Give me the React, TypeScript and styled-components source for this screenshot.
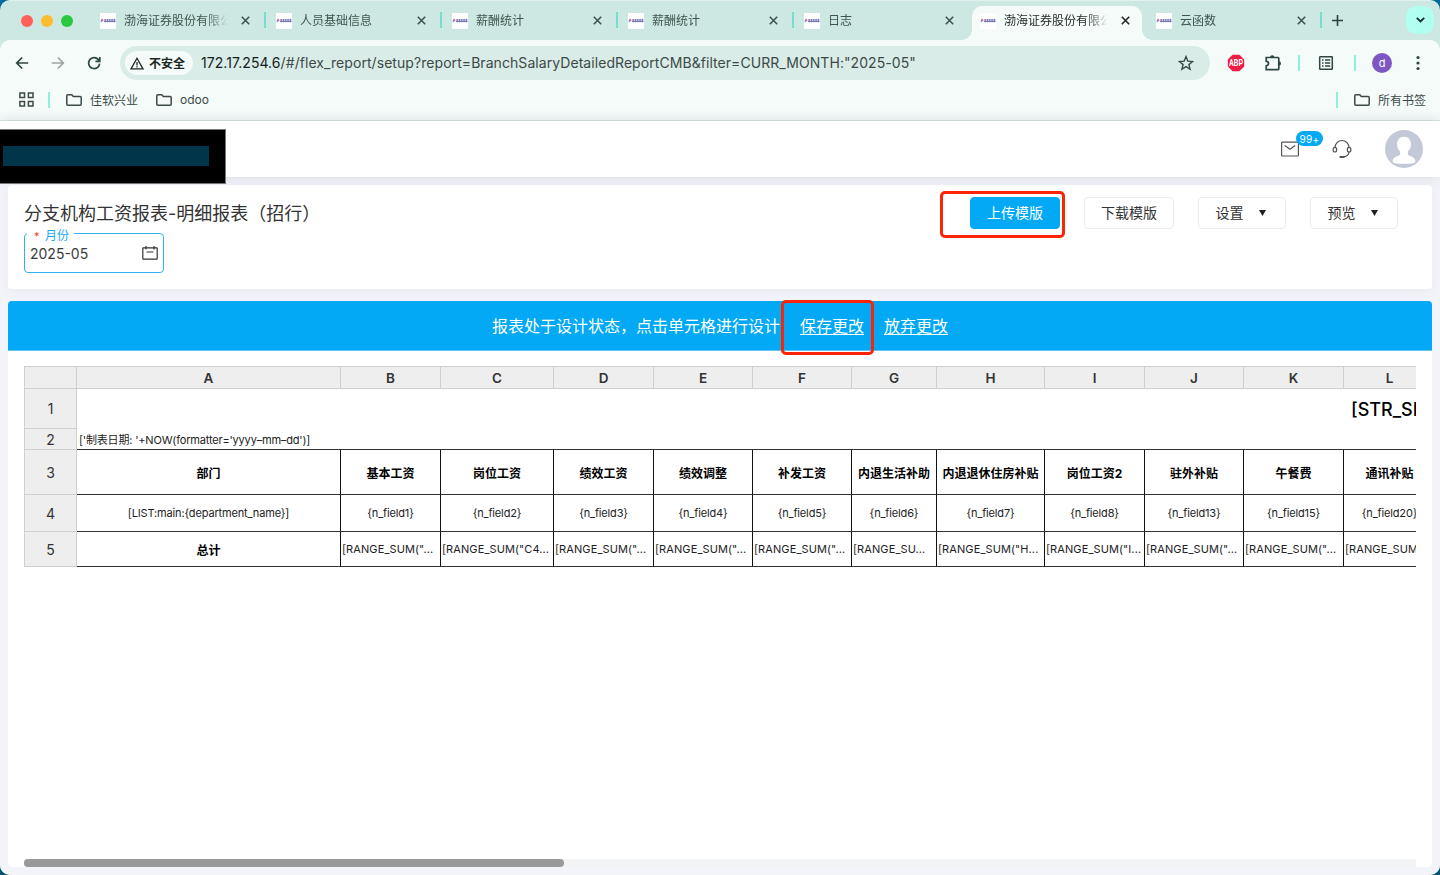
import React from 'react';
import styled, { createGlobalStyle, css } from 'styled-components';

const latin = '"Inter", "Noto Sans CJK SC", sans-serif';

const Global = createGlobalStyle`
  * { box-sizing: border-box; }
  html, body { margin: 0; padding: 0; background: #006a8e; overflow: hidden; }
  body { font-family: ${latin}; }
`;

const Desktop = styled.div`
  width: 1440px;
  height: 875px;
  background: linear-gradient(#00699c, #00566f);
`;
const Window = styled.div`
  width: 1440px;
  height: 875px;
  display: flex;
  flex-direction: column;
  border-radius: 10px;
  overflow: hidden;
  background: #cde8e2;
  border-top: 1px solid #e2f1ee;
`;

/* ---------- tab strip ---------- */
const TabStrip = styled.div`
  height: 39px;
  flex: none;
  display: flex;
  align-items: stretch;
  padding-left: 21px;
`;
const Lights = styled.div`
  width: 67px;
  display: flex;
  gap: 8px;
  align-items: center;
`;
const Light = styled.span<{ $c: string }>`
  width: 12px;
  height: 12px;
  border-radius: 50%;
  background: ${p => p.$c};
`;
const Tab = styled.div<{ $active?: boolean }>`
  position: relative;
  width: 176px;
  display: flex;
  align-items: center;
  padding: 0 12px;
  font-size: 12px;
  color: #3f5450;
  ${p => p.$active && css`
    width: 170px;
    margin: 5px 2px 0 4px;
    padding: 0 8px 5px;
    background: #f4fbf9;
    border-radius: 10px 10px 0 0;
    color: #1c2a27;
    &::before, &::after {
      content: '';
      position: absolute;
      bottom: 0;
      width: 10px;
      height: 10px;
    }
    &::before { left: -10px; background: radial-gradient(circle at 0 0, transparent 9.5px, #f4fbf9 10px); }
    &::after { right: -10px; background: radial-gradient(circle at 100% 0, transparent 9.5px, #f4fbf9 10px); }
  `}
`;
const Favicon = styled.svg`
  width: 16px;
  height: 16px;
  flex: none;
  margin-right: 8px;
  background: #fff;
`;
const TabTitle = styled.span`
  width: 105px;
  height: 18px;
  line-height: 18px;
  white-space: nowrap;
  overflow: hidden;
  mask-image: linear-gradient(90deg, #000 82px, transparent 104px);
`;
const Close = styled.svg`
  width: 9px;
  height: 9px;
  flex: none;
  margin-left: 12px;
  stroke: currentColor;
  stroke-width: 1.6;
  fill: none;
`;
const TabSep = styled.span`
  position: absolute;
  right: -2px;
  top: 11px;
  width: 2px;
  height: 16px;
  background: #7adccd;
`;
const NewTab = styled.svg`
  width: 11px;
  height: 11px;
  align-self: center;
  margin-left: 12px;
  stroke: #2c413d;
  stroke-width: 1.6;
`;
const TabSearch = styled.div`
  width: 28px;
  height: 28px;
  margin: 5px 6px 0 auto;
  border-radius: 10px;
  background: #b2fff1;
  display: grid;
  place-items: center;
`;

/* ---------- toolbar ---------- */
const Chrome = styled.div`
  height: 81px;
  flex: none;
  background: #f4fbf9;
  border-radius: 10px 10px 0 0;
  border-bottom: 1px solid #d9e7e3;
`;
const Toolbar = styled.div`
  height: 46px;
  display: flex;
  align-items: center;
  padding: 0 14px;
`;
const NavIcon = styled.svg<{ $dim?: boolean }>`
  width: 16px;
  height: 16px;
  margin-right: 20px;
  flex: none;
  fill: none;
  stroke: ${p => (p.$dim ? '#9aa6a3' : '#2f4743')};
  stroke-width: 1.7;
`;
const Omnibox = styled.div`
  width: 1090px;
  height: 34px;
  margin-left: -2px;
  border-radius: 17px;
  background: #daece8;
  display: flex;
  align-items: center;
  padding: 0 16px 0 5px;
  flex: none;
`;
const Security = styled.div`
  width: 68px;
  height: 24px;
  border-radius: 12px;
  background: #f4fbf9;
  display: flex;
  align-items: center;
  gap: 5px;
  padding-left: 5px;
  font-size: 12px;
  font-weight: 600;
  color: #1d2926;
  white-space: nowrap;
  span { padding-bottom: 2px; }
`;
const Url = styled.div`
  margin-left: 8px;
  font-size: 14px;
  line-height: 20px;
  letter-spacing: 0.062px;
  color: #3c4a47;
  white-space: nowrap;
  b { font-weight: 400; color: #14201d; }
`;
const Star = styled.svg`
  width: 16px;
  height: 16px;
  margin-left: auto;
  fill: none;
  stroke: #3c4a47;
  stroke-width: 1.4;
`;
const Actions = styled.div`
  flex: 1;
  display: flex;
  align-items: center;
  padding-left: 17px;
`;
const ToolIcon = styled.svg<{ $ml?: number }>`
  flex: none;
  margin-left: ${p => p.$ml || 0}px;
  fill: none;
  stroke: #2f4743;
`;
const Bar = styled.span<{ $l?: number; $r?: number }>`
  width: 2px;
  height: 16px;
  flex: none;
  background: #90f0e0;
  margin: 0 ${p => p.$r || 0}px 0 ${p => p.$l || 0}px;
`;
const Profile = styled.span`
  width: 20px;
  height: 20px;
  flex: none;
  margin: 0 24px 0 16px;
  border-radius: 50%;
  background: #7e57c2;
  color: #fff;
  font-size: 11px;
  line-height: 20px;
  text-align: center;
`;
const Bookmarks = styled.div`
  height: 28px;
  display: flex;
  align-items: center;
  padding: 0 14px 1px 19px;
  font-size: 12px;
  color: #3b4a47;
`;
const Bookmark = styled.span`
  display: flex;
  align-items: center;
  gap: 8px;
  margin-right: 18px;
  white-space: nowrap;
  &:last-child { margin: 0; }
`;
const Grow = styled.span`
  flex: 1;
`;

/* ---------- page ---------- */
const Page = styled.div`
  flex: 1;
  background: #f3f4fa;
  display: flex;
  flex-direction: column;
  min-height: 0;
`;
const Header = styled.header`
  position: relative;
  height: 56px;
  flex: none;
  background: #fff;
  box-shadow: 0 0 12px rgba(40, 45, 70, 0.14);
  display: flex;
  align-items: center;
  justify-content: flex-end;
  padding-right: 17px;
`;
const Redaction = styled.div`
  position: absolute;
  left: 0;
  top: 8px;
  z-index: 2;
  width: 226px;
  height: 55px;
  background: #000;
  border: 1px solid #777;
  border-left: 0;
  padding: 16px 0 0 3px;
`;
const RedactionBar = styled.div`
  width: 206px;
  height: 20px;
  background: #00354a;
`;
const Mail = styled.div`
  position: relative;
  width: 18px;
  height: 18px;
  margin-right: 33px;
`;
const Count = styled.span`
  position: absolute;
  left: 15px;
  top: -9px;
  width: 27px;
  height: 15px;
  border-radius: 8px;
  background: #03a9f4;
  color: #fff;
  font-size: 10px;
  line-height: 16px;
  letter-spacing: 0.3px;
  text-align: center;
`;
const Headset = styled.svg`
  width: 20px;
  height: 20px;
  margin-right: 33px;
  fill: none;
  stroke: #555;
  stroke-width: 1.2;
`;
const Card = styled.section`
  height: 104px;
  flex: none;
  margin: 8px 8px 0;
  padding: 12px 34px 0 16px;
  border-radius: 4px;
  background: #fff;
  box-shadow: 0 2px 10px rgba(60, 70, 110, 0.05);
  display: flex;
  justify-content: space-between;
  align-items: flex-start;
`;
const Title = styled.h1`
  margin: 4px 0 6px;
  font-size: 18px;
  line-height: 26px;
  font-weight: 400;
  color: #333;
  white-space: nowrap;
`;
const Field = styled.div`
  position: relative;
  width: 140px;
  height: 40px;
  border: 1px solid #2fb3f0;
  border-radius: 4px;
  display: flex;
  align-items: center;
  justify-content: space-between;
  padding: 1px 5px 0;
  font-size: 14px;
  color: #3a3a3a;
  svg { margin-top: -2px; }
`;
const Label = styled.label`
  position: absolute;
  left: 2px;
  top: -7px;
  width: 47px;
  height: 18px;
  padding-left: 7px;
  background: #fff;
  display: flex;
  gap: 6px;
  font-size: 12px;
  line-height: 18px;
  color: #1ba9ee;
  white-space: nowrap;
  i { font-style: normal; color: #f5452d; width: 5px; font-size: 11px; }
`;
const Buttons = styled.div`
  display: flex;
`;
const Button = styled.button<{ $w: number; $primary?: boolean; $menu?: boolean }>`
  position: relative;
  width: ${p => p.$w}px;
  height: 32px;
  margin-left: 24px;
  padding: 0 ${p => (p.$menu ? 3 : 0)}px 0 0;
  border-radius: 4px;
  border: 1px solid ${p => (p.$primary ? '#03a9f4' : '#ececec')};
  background: ${p => (p.$primary ? '#03a9f4' : '#fff')};
  color: ${p => (p.$primary ? '#fff' : '#333')};
  font: 14px/20px ${latin};
  display: flex;
  align-items: center;
  justify-content: center;
  gap: 15px;
  svg { margin-top: -1px; }
`;
const Mark = styled.span<{ $x: number; $y: number; $w: number; $h: number }>`
  position: absolute;
  left: ${p => p.$x}px;
  top: ${p => p.$y}px;
  width: ${p => p.$w}px;
  height: ${p => p.$h}px;
  border: 3px solid #fb2407;
  border-radius: 5px;
  z-index: 3;
`;
const Sheet = styled.section`
  height: 566px;
  flex: none;
  margin: 12px 8px 0;
  background: #fff;
  border-radius: 4px;
  display: flex;
  flex-direction: column;
`;
const Notice = styled.div`
  height: 50px;
  flex: none;
  border-radius: 4px 4px 0 0;
  background: #03a9f4;
  border-bottom: 1px solid #62c6f6;
  color: #fff;
  font-size: 16px;
  line-height: 24px;
  display: flex;
  align-items: center;
  justify-content: center;
  gap: 20px;
`;
const Link = styled.a`
  position: relative;
  text-decoration: underline;
  text-underline-offset: 2px;
  text-decoration-thickness: 1px;
`;
const Viewport = styled.div`
  flex: 1;
  margin: 15px 16px 0;
  overflow: hidden;
`;
const Grid = styled.div`
  width: 1412px;
  display: grid;
  grid-template-columns: 53px 264px 100px 113px 100px 99px 99px 85px 108px 100px 99px 100px 92px;
  grid-template-rows: 22px 40px 21px 45px 37px 35px;
  border-top: 1px solid #cfcfcf;
`;
const Corner = styled.div`
  background: #eee;
  border: 1px solid #cfcfcf;
  border-top: 0;
`;
const ColHead = styled(Corner)`
  border-left: 0;
  text-align: center;
  font-size: 13.5px;
  line-height: 22px;
  font-weight: 600;
  color: #333;
`;
const RowHead = styled(Corner)`
  display: grid;
  place-items: center;
  font-size: 14px;
  color: #333;
`;
const Cell = styled.div<{ $bold?: boolean; $left?: boolean }>`
  min-width: 0;
  display: flex;
  align-items: center;
  justify-content: ${p => (p.$left ? 'flex-start' : 'center')};
  padding: 0 1px;
  border-right: 1px solid #111;
  border-bottom: 1px solid #333;
  font-size: ${p => (p.$bold ? 12 : 11)}px;
  letter-spacing: ${p => (p.$bold ? 0 : p.$left ? 0.1 : -0.15)}px;
  font-weight: ${p => (p.$bold ? 700 : 400)};
  color: ${p => (p.$bold ? '#000' : '#222')};
  white-space: nowrap;
`;
const Free = styled.div<{ $title?: boolean }>`
  grid-column: 2 / -1;
  display: flex;
  align-items: center;
  white-space: nowrap;
  font-size: ${p => (p.$title ? 18 : 11)}px;
  letter-spacing: ${p => (p.$title ? 0 : -0.18)}px;
  font-weight: ${p => (p.$title ? 500 : 400)};
  padding-left: ${p => (p.$title ? 1274 : 2)}px;
  padding-bottom: ${p => (p.$title ? 0 : 1)}px;
  color: ${p => (p.$title ? '#000' : '#222')};
  border-bottom: ${p => (p.$title ? '0' : '1px solid #333')};
`;
const Track = styled.div`
  height: 8px;
  margin: 0 16px;
  flex: none;
  background: #f2f3f5;
`;
const Thumb = styled.div`
  width: 540px;
  height: 8px;
  border-radius: 4px;
  background: #999;
`;

const Fav = () => (
  <Favicon viewBox="0 0 16 16">
    <path d="M.8 5.8h1.4l1.6 1.4-1.2 1z" fill="#e8604c" />
    <path d="M.8 6.5l1.5 1.5L.8 9.6z" fill="#3b6fd0" />
    <path d="M4 7h11.6M4 8.5h11.6M5.2 6v3.4M7.5 6v3.4M9.8 6v3.4M12.1 6v3.4M14.4 6v3.4" stroke="#4a4a9e" strokeWidth=".8" opacity=".85" />
  </Favicon>
);
const X = () => (
  <Close viewBox="0 0 9 9"><path d="M.8.8l7.4 7.4M8.2.8L.8 8.2" /></Close>
);
const Folder = () => (
  <svg width="16" height="12" viewBox="0 0 16 12" fill="none" stroke="#3b4a47" strokeWidth="1.5">
    <path d="M.8 10.2V1.8c0-.6.4-1 1-1h4l1.5 1.6h6.9c.6 0 1 .4 1 1v6.8c0 .6-.4 1-1 1H1.8c-.6 0-1-.4-1-1z" />
  </svg>
);
const Caret = () => (
  <svg width="7" height="6" viewBox="0 0 7 6"><path d="M0 0h7L3.5 6z" fill="#222" /></svg>
);

const tabs = [
  { t: '渤海证券股份有限公司', sep: true },
  { t: '人员基础信息', sep: true },
  { t: '薪酬统计', sep: true },
  { t: '薪酬统计', sep: true },
  { t: '日志' },
  { t: '渤海证券股份有限公司', active: true },
  { t: '云函数', sep: true },
];
const letters = 'ABCDEFGHIJKL'.split('');
const rows = [
  { n: 3, bold: () => true, left: () => false, cells: ['部门', '基本工资', '岗位工资', '绩效工资', '绩效调整', '补发工资', '内退生活补助', '内退退休住房补贴', '岗位工资2', '驻外补贴', '午餐费', '通讯补贴'] },
  { n: 4, bold: () => false, left: () => false, cells: ['[LIST:main:{department_name}]', '{n_field1}', '{n_field2}', '{n_field3}', '{n_field4}', '{n_field5}', '{n_field6}', '{n_field7}', '{n_field8}', '{n_field13}', '{n_field15}', '{n_field20}'] },
  { n: 5, bold: (i: number) => i === 0, left: (i: number) => i > 0, cells: ['总计', '[RANGE_SUM("...', '[RANGE_SUM("C4...', '[RANGE_SUM("...', '[RANGE_SUM("...', '[RANGE_SUM("...', '[RANGE_SU...', '[RANGE_SUM("H...', '[RANGE_SUM("I...', '[RANGE_SUM("...', '[RANGE_SUM("...', '[RANGE_SUM("...'] },
];

export default function App() {
  return (
    <Desktop>
      <Global />
      <Window>
        <TabStrip>
          <Lights><Light $c="#ff5f57" /><Light $c="#febc2e" /><Light $c="#28c840" /></Lights>
          {tabs.map((tab, i) => (
            <Tab key={i} $active={tab.active}>
              <Fav />
              <TabTitle>{tab.t}</TabTitle>
              <X />
              {tab.sep && <TabSep />}
            </Tab>
          ))}
          <NewTab viewBox="0 0 11 11"><path d="M5.5 0v11M0 5.5h11" /></NewTab>
          <TabSearch>
            <svg width="9" height="6" viewBox="0 0 9 6" fill="none" stroke="#12312b" strokeWidth="1.9"><path d="M.8.8l3.7 3.7L8.2.8" /></svg>
          </TabSearch>
        </TabStrip>

        <Chrome>
          <Toolbar>
            <NavIcon viewBox="0 0 16 16"><path d="M14.2 8H3M8.2 2.5L2.7 8l5.5 5.5" /></NavIcon>
            <NavIcon $dim viewBox="0 0 16 16"><path d="M1.8 8H13M7.8 2.5L13.3 8l-5.5 5.5" /></NavIcon>
            <NavIcon viewBox="0 0 16 16"><path d="M13.6 8.6A5.5 5.5 0 1 1 12.4 4.6L13.4 5.8M13.8 2v4.3H9.4" /></NavIcon>
            <Omnibox>
              <Security>
                <svg width="14" height="13" viewBox="0 0 14 13" fill="none" stroke="#1d2926" strokeWidth="1.3">
                  <path d="M7 1.3L13 11.9H1zM7 5v3.4M7 9.3v1.3" />
                </svg>
                <span>不安全</span>
              </Security>
              <Url><b>172.17.254.6</b>/#/flex_report/setup?report=BranchSalaryDetailedReportCMB&amp;filter=CURR_MONTH:"2025-05"</Url>
              <Star viewBox="0 0 16 16"><path d="M8 1.6l1.8 4.5 4.8.4-3.7 3.1 1.2 4.7L8 11.7l-4.1 2.6 1.2-4.7L1.4 6.5l4.8-.4z" /></Star>
            </Omnibox>
            <Actions>
              <svg width="18" height="18" viewBox="0 0 18 18">
                <path d="M5.6.8h6.8L17.2 5.6v6.8l-4.8 4.8H5.6L.8 12.4V5.6z" fill="#ed1e45" />
                <text x="9" y="12" fontSize="8.2" fontWeight="700" fill="#fff" textAnchor="middle" textLength="14" lengthAdjust="spacingAndGlyphs" fontFamily="Roboto, sans-serif">ABP</text>
              </svg>
              <ToolIcon $ml={19} width="18" height="18" viewBox="0 0 18 18" strokeWidth="1.7">
                <path d="M2.2 3.5h11.6c.6 0 1 .4 1 1v10.2c0 .6-.4 1-1 1H2.2v-3.8c1.5-.3 2.3-1.2 2.3-2.3S3.7 7.500 2.2 7.2z" />
                <path d="M6 3.500a2.200 2.200 0 0 1 4.400 0zM14.800 7.300a2.200 2.200 0 0 1 0 4.400z" fill="#2f4743" stroke="none" />
              </ToolIcon>
              <Bar $l={16} $r={18} />
              <ToolIcon width="16" height="16" viewBox="0 0 16 16" strokeWidth="1.5">
                <path d="M2.2 1.7h11.6c.3 0 .5.2.5.5v11.6c0 .3-.2.5-.5.5H2.2c-.3 0-.5-.2-.5-.5V2.2c0-.3.2-.5.5-.5zM4 5h1.5M7 5h5.2M4 8h1.5M7 8h5.2M4 11h1.5M7 11h5.2" />
              </ToolIcon>
              <Bar $l={20} />
              <Profile>d</Profile>
              <svg width="4" height="16" viewBox="0 0 4 16" fill="#2f4743"><circle cx="2" cy="2.5" r="1.6" /><circle cx="2" cy="8" r="1.6" /><circle cx="2" cy="13.5" r="1.6" /></svg>
            </Actions>
          </Toolbar>
          <Bookmarks>
            <svg width="15" height="15" viewBox="0 0 15 15" fill="none" stroke="#3b4a47" strokeWidth="1.5">
              <path d="M.9.9h4.6v4.6H.9zM9.4.9H14v4.6H9.4zM.9 9.4h4.6V14H.9zM9.4 9.4H14V14H9.4z" />
            </svg>
            <Bar $l={14} $r={16} />
            <Bookmark><Folder />佳软兴业</Bookmark>
            <Bookmark><Folder />odoo</Bookmark>
            <Grow />
            <Bar $r={16} />
            <Bookmark><Folder />所有书签</Bookmark>
          </Bookmarks>
        </Chrome>

        <Page>
          <Header>
            <Redaction><RedactionBar /></Redaction>
            <Mail>
              <svg width="18" height="18" viewBox="0 0 18 18" fill="none" stroke="#555" strokeWidth="1.2"><rect x=".6" y="2.2" width="16.8" height="13.8" rx=".8" /><path d="M3.8 5.6L9 9.3l5.2-3.7" /></svg>
              <Count>99+</Count>
            </Mail>
            <Headset viewBox="0 0 20 20">
              <path d="M3 8.8C3 4.6 6 1.5 10 1.5s7 3.1 7 7.3M17.2 12.8c-.5 2.500-2.500 4.500-5.200 4.900" />
              <ellipse cx="2.9" cy="10.7" rx="1.8" ry="2.3" /><ellipse cx="17.1" cy="10.7" rx="1.8" ry="2.3" />
              <path d="M8.4 18h3.4" strokeWidth="2" strokeLinecap="round" />
            </Headset>
            <svg width="38" height="38" viewBox="0 0 38 38">
              <circle cx="19" cy="19" r="19" fill="#c3c9d6" />
              <path d="M19 6.7c4.3 0 7 3.1 7 7.4 0 3.3-1.3 5.7-3.1 7.4v3.2c1.4 1.6 7.1 1.7 7.5 6.3.1 1.3-.9 2-2.4 2.2-5 .8-13 .8-18 0-1.5-.2-2.500-.9-2.400-2.200.4-4.600 6.100-4.700 7.500-6.300v-3.200c-1.800-1.700-3.100-4.100-3.100-7.400 0-4.300 2.700-7.400 7-7.400z" fill="#fff" />
            </svg>
          </Header>

          <Card>
            <div>
              <Title>分支机构工资报表-明细报表（招行）</Title>
              <Field>
                <Label><i>*</i>月份</Label>
                2025-05
                <svg width="16" height="14" viewBox="0 0 16 14" fill="none" stroke="#333" strokeWidth="1.2"><path d="M1.3 1.8h13.4c.3 0 .5.2.5.5v10.4c0 .3-.2.5-.5.5H1.3c-.3 0-.5-.2-.5-.5V2.3c0-.3.2-.5.5-.5zM4 0v3.4M12 0v3.4M4.5 6h7" /></svg>
              </Field>
            </div>
            <Buttons>
              <Button $w={90} $primary>上传模版<Mark $x={-31} $y={-7} $w={125} $h={47} /></Button>
              <Button $w={90}>下载模版</Button>
              <Button $w={88} $menu>设置<Caret /></Button>
              <Button $w={88} $menu>预览<Caret /></Button>
            </Buttons>
          </Card>

          <Sheet>
            <Notice>
              <span>报表处于设计状态，点击单元格进行设计</span>
              <Link>保存更改<Mark $x={-19} $y={-14} $w={93} $h={55} /></Link>
              <Link>放弃更改</Link>
            </Notice>
            <Viewport>
              <Grid>
                <Corner />
                {letters.map(l => <ColHead key={l}>{l}</ColHead>)}
                <RowHead>1</RowHead>
                <Free $title>[STR_SPLIT]</Free>
                <RowHead>2</RowHead>
                <Free>['制表日期: '+NOW(formatter='yyyy–mm–dd')]</Free>
                {rows.map(r => (
                  <React.Fragment key={r.n}>
                    <RowHead>{r.n}</RowHead>
                    {r.cells.map((c, i) => (
                      <Cell key={i} $bold={r.bold(i)} $left={r.left(i)}>{c}</Cell>
                    ))}
                  </React.Fragment>
                ))}
              </Grid>
            </Viewport>
            <Track><Thumb /></Track>
          </Sheet>
        </Page>
      </Window>
    </Desktop>
  );
}
